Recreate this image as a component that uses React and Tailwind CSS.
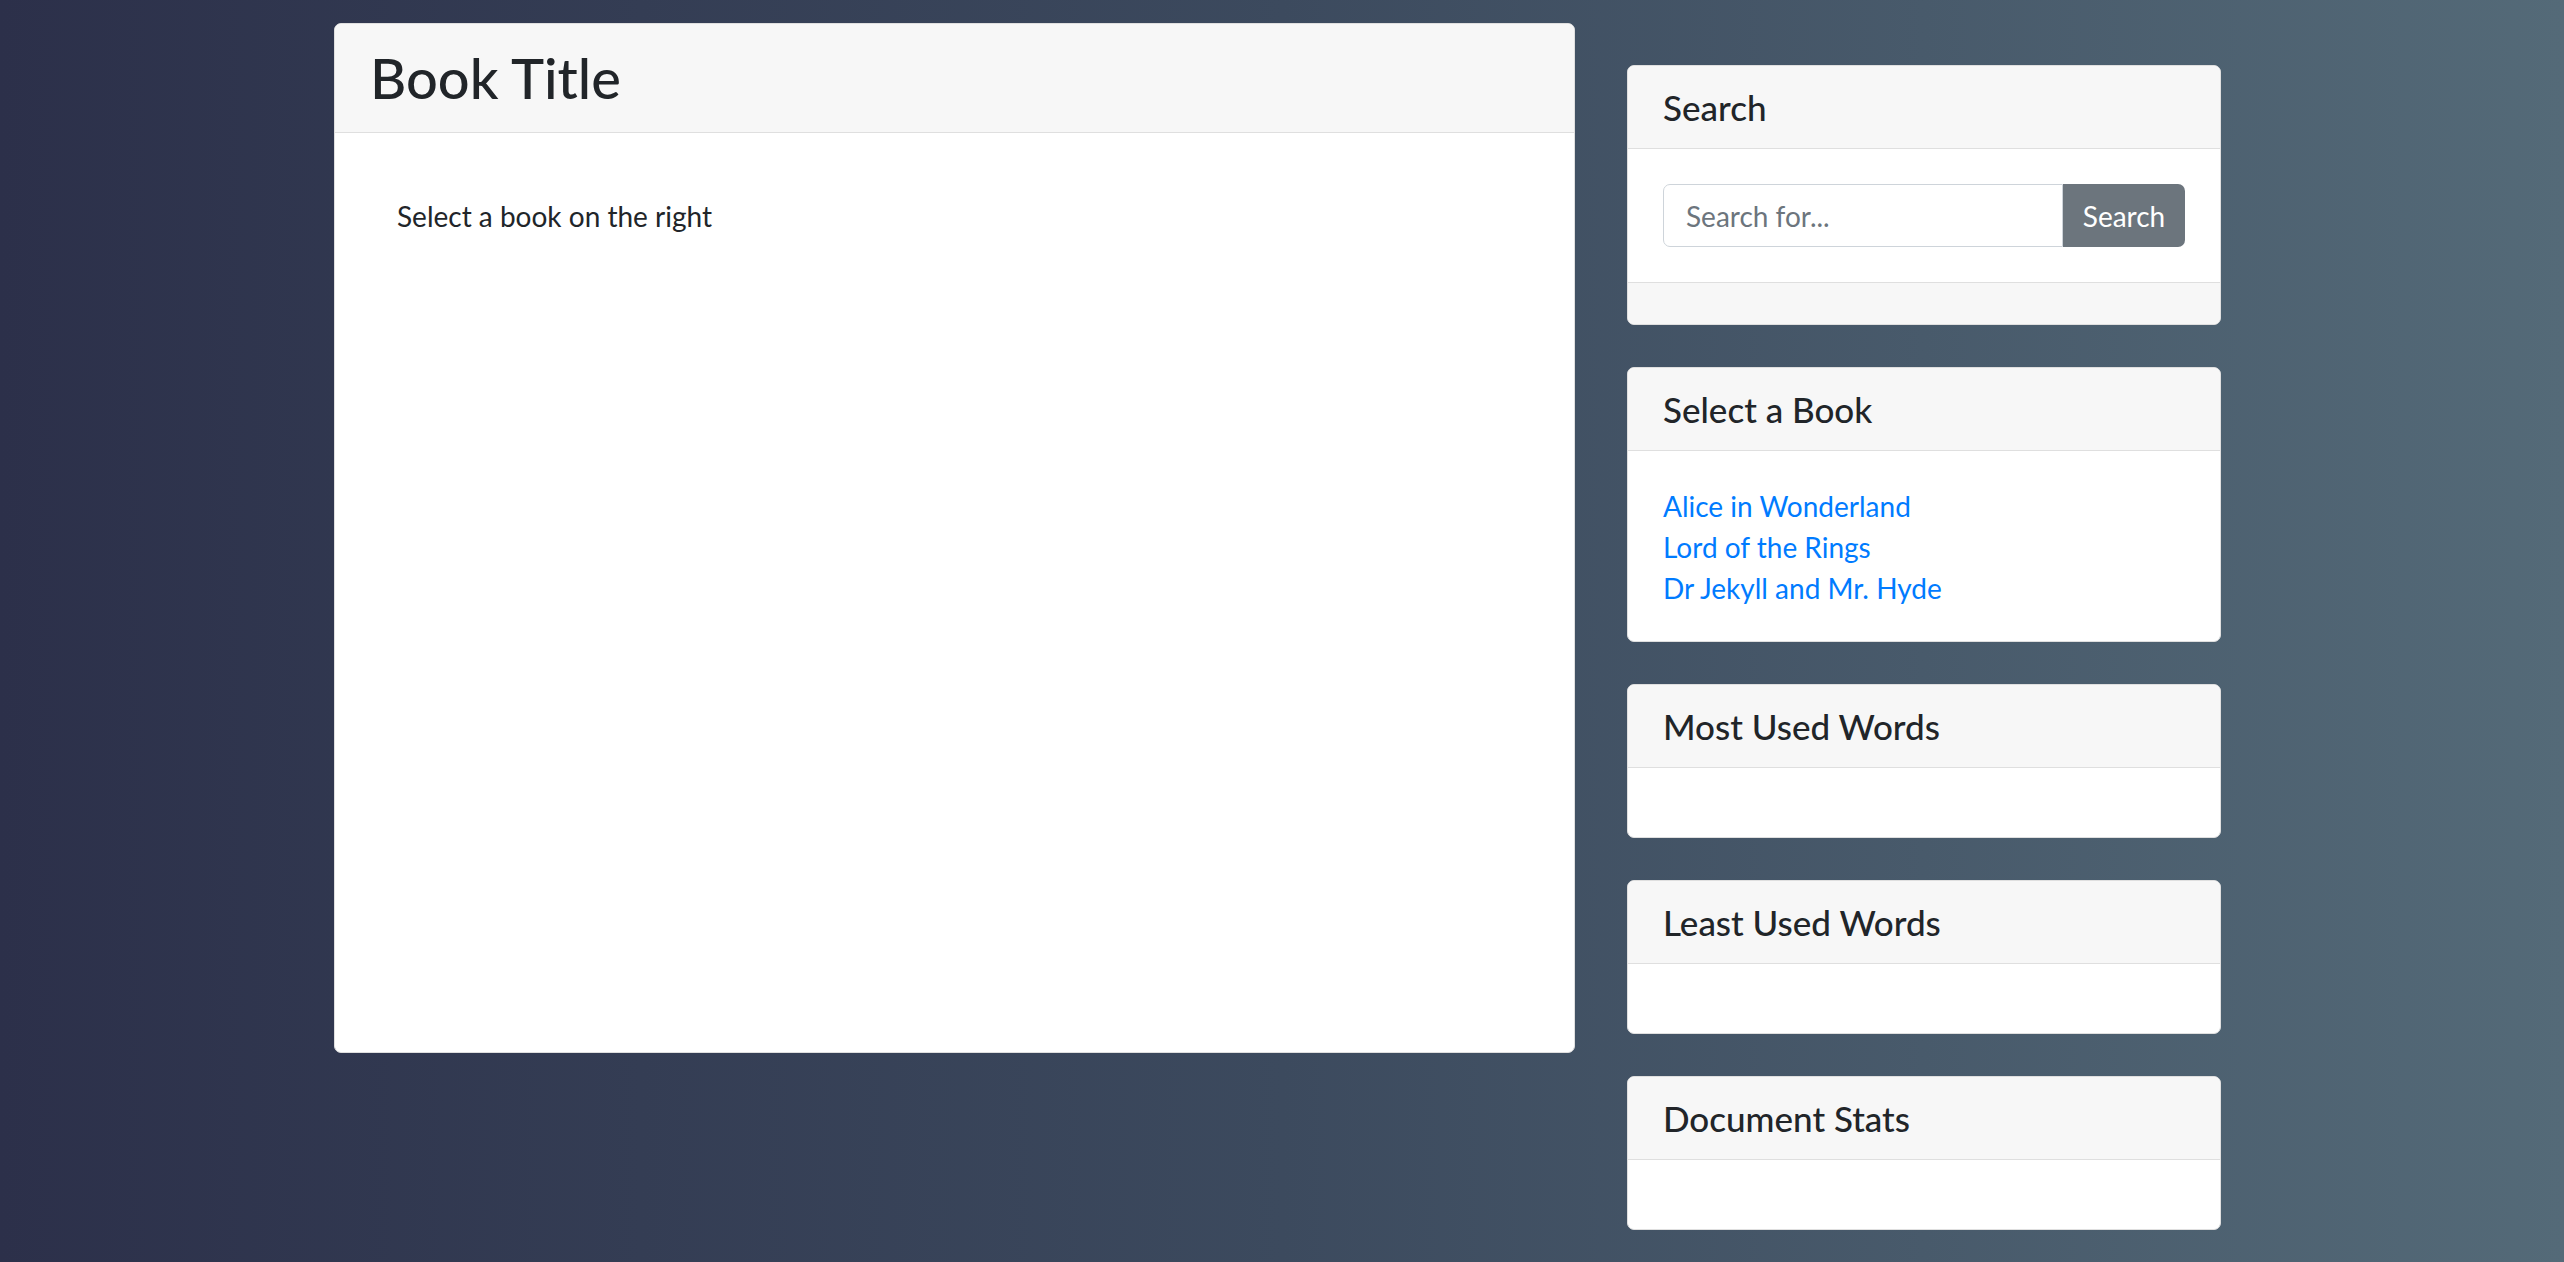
import React from "react";

const font = { fontFamily: 'Lato, "Segoe UI", "Noto Sans", sans-serif' };

function SideCard({ title, children, footer, bodyClass = "pt-[35px] pb-[34px]" }) {
  return (
    <div className="mb-[42px] w-full overflow-hidden rounded-[7px] border border-[#dfdfdf] bg-white">
      <div className="h-[83px] border-b border-[#dfdfdf] bg-[#f7f7f7] px-[35px] flex items-center">
        <h5 className="text-[35px] font-medium leading-[1.2] text-[#212529]">{title}</h5>
      </div>
      <div className={"px-[35px] " + bodyClass}>{children}</div>
      {footer && <div className="h-[42px] border-t border-[#dfdfdf] bg-[#f7f7f7]" />}
    </div>
  );
}

export default function App() {
  return (
    <div
      className="min-h-screen w-full bg-[linear-gradient(to_right,#2c304a_0%,#3c4a5e_50%,#546a78_100%)]"
      style={font}
    >
      <div className="flex items-start pl-[334px]">
        <div className="mt-[23px] w-[1241px] h-[1030px] overflow-hidden rounded-[7px] border border-[#dfdfdf] bg-white">
          <div className="h-[109px] border-b border-[#dfdfdf] bg-[#f7f7f7] px-[35px] flex items-center">
            <h2 className="text-[56px] font-medium leading-[1.2] text-[#212529]">Book Title</h2>
          </div>
          <div className="px-[62px] pt-[62px]">
            <p className="text-[28px] leading-[1.5] text-[#212529]">Select a book on the right</p>
          </div>
        </div>

        <div className="ml-[52px] mt-[65px] w-[594px] flex flex-col">
          <SideCard title="Search" footer bodyClass="py-[35px]">
            <div className="flex h-[63px]">
              <input
                type="text"
                placeholder="Search for..."
                className="h-full w-[400px] flex-1 rounded-l-[7px] border border-[#ced4da] bg-white px-[22px] text-[28px] text-[#495057] placeholder:text-[#6c757d] outline-none"
                style={font}
              />
              <button
                className="h-full w-[123px] rounded-r-[7px] bg-[#6c757d] text-[28px] text-white"
                style={font}
              >
                Search
              </button>
            </div>
          </SideCard>

          <SideCard title="Select a Book" bodyClass="pt-[35px] pb-[32px]">
            <div className="flex flex-col text-[28px] leading-[41px] text-[#007bff]">
              <a href="#" className="w-fit">Alice in Wonderland</a>
              <a href="#" className="w-fit">Lord of the Rings</a>
              <a href="#" className="w-fit">Dr Jekyll and Mr. Hyde</a>
            </div>
          </SideCard>

          <SideCard title="Most Used Words" />
          <SideCard title="Least Used Words" />
          <SideCard title="Document Stats" />
        </div>
      </div>
    </div>
  );
}
